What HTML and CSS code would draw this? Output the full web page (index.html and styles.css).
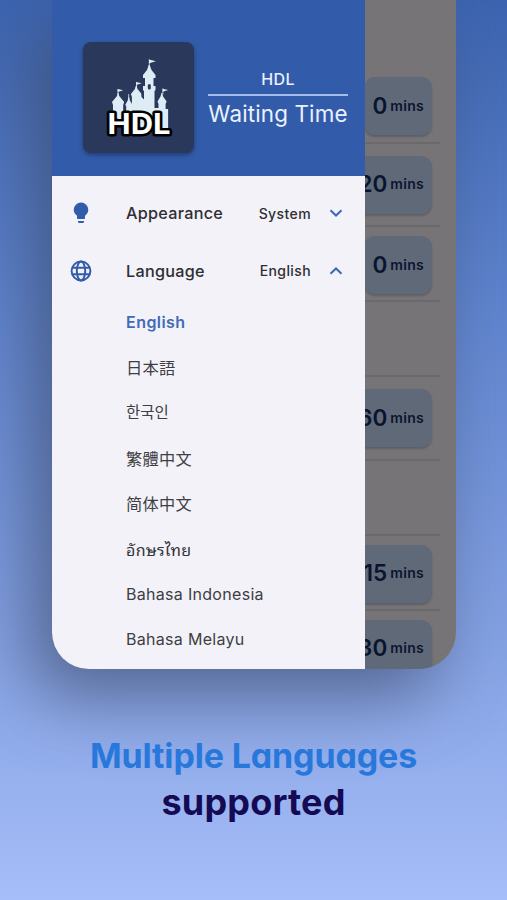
FILE: index.html
```html
<!DOCTYPE html>
<html lang="en">
<head>
<meta charset="utf-8">
<title>HDL Waiting Time</title>
<link rel="stylesheet" href="styles.css">
</head>
<body>
<main class="page">
  <section class="phone">
    <aside class="drawer">
      <header class="header">
        <div class="logo">
          <svg width="111" height="111" viewBox="0 0 111 111">
            <g fill="#deedf5">
              <path d="M30 75V63l-1-3 5-6 .7-3h.8l.7 3 5 6-1 3v7h3v-6l-1-1 2.500-4.500.8-3.500h.6l.8 3.500 2 3.500V55l-1-3 4-5 .8-3h1l.8 3 3.700 4.500.3 3.500 2.500 2.500V49l-1-1v-4h2v-8h-2v-3l4-5 1.700-5h1l1.800 5 4 5v3h-2v8h2v4l-1 1v17h4V62l-1-2.500 3-5 .9-3.500h.8l.9 3.500 3.500 5-1 2.500v5h2.500v23H72z"/>
              <path d="M34.700 47l5.500 1.200-5.500 1.800zM53.200 40l5.500 1.200-5.500 1.800zM66 17.500l7 1.700-4.500 1.300L66 21.500zM79.600 46.800l5.500 1.200-5.500 1.800z"/>
            </g>
            <path stroke="#deedf5" stroke-width=".8" d="M35 47v6M45.700 52v6M53.500 40v6M66.300 17.500v7M79.900 46.500v6"/>
            <rect x="64.800" y="42" width="3" height="5.500" rx="1.500" fill="#2a395b"/>
            <text class="logo-text" x="24.500" y="92" textLength="63" lengthAdjust="spacingAndGlyphs">HDL</text>
          </svg>
        </div>
        <div class="title">
          <div class="title-top">HDL</div>
          <div class="title-main">Waiting Time</div>
        </div>
      </header>
      <div class="menu">
        <div class="row">
          <svg class="icon" viewBox="0 0 24 24"><path fill="currentColor" d="M12 1.500a7.300 7.300 0 0 0-7.300 7.300c0 2.600 1.500 4.600 3.300 5.900V17c0 .6.400 1 1 1h6c.6 0 1-.4 1-1v-2.300c1.800-1.300 3.300-3.300 3.300-5.900A7.300 7.300 0 0 0 12 1.500zM9 20h6v.8c0 .7-.4 1.200-1 1.200h-4c-.6 0-1-.5-1-1.200z"/></svg>
          <span class="label appearance">Appearance</span>
          <span class="value">System</span>
          <svg class="chevron" viewBox="0 0 14 14"><path d="M1.500 4.200 7 9.500l5.500-5.300"/></svg>
        </div>
        <div class="row">
          <svg class="icon" viewBox="0 0 24 24" fill="none" stroke="currentColor" stroke-width="2"><circle cx="12" cy="12" r="9.400"/><ellipse cx="12" cy="12" rx="4.200" ry="9.400"/><path d="M3.200 8.700h17.600M3.200 15.300h17.600"/></svg>
          <span class="label language">Language</span>
          <span class="value">English</span>
          <svg class="chevron" viewBox="0 0 14 14"><path d="M1.500 9.800 7 4.500l5.500 5.300"/></svg>
        </div>
        <ul class="languages">
          <li class="selected">English</li>
          <li class="ja" lang="ja">日本語</li>
          <li class="ko" lang="ko">한국인</li>
          <li class="tc" lang="zh-Hant">繁體中文</li>
          <li class="sc" lang="zh-Hans">简体中文</li>
          <li class="th" lang="th">อักษรไทย</li>
          <li>Bahasa Indonesia</li>
          <li>Bahasa Melayu</li>
        </ul>
      </div>
    </aside>
    <div class="waits">
      <div class="slot first"><div class="card"><b>0</b>mins</div></div>
      <div class="slot tall"><div class="card"><b>20</b>mins</div></div>
      <div class="slot"><div class="card"><b>0</b>mins</div></div>
      <div class="slot"></div>
      <div class="slot tall"><div class="card"><b>60</b>mins</div></div>
      <div class="slot"></div>
      <div class="slot"><div class="card"><b>15</b>mins</div></div>
      <div class="slot last"><div class="card"><b>30</b>mins</div></div>
    </div>
  </section>
  <h1 class="headline"><span class="accent">Multiple Languages</span><span class="dark">supported</span></h1>
</main>
</body>
</html>
```
FILE: styles.css
```css
* { box-sizing: border-box; }
body { margin: 0; font-family: Inter, "Noto Sans", sans-serif; }
.page {
  width: 507px; height: 900px; overflow: hidden;
  background: linear-gradient(180deg, #3c64b0 0%, #5f84ce 34%, #85a2e3 72%, #a6bef9 100%);
}
.phone {
  display: flex; width: 404.5px; height: 669px; margin-left: 51.5px;
  border-radius: 0 0 37px 37px; overflow: hidden; background: #767476;
  box-shadow: -20px 27px 68px rgba(60, 74, 106, .68);
}
.drawer { width: 313px; flex: none; z-index: 1; background: #f3f2f9; }
.header {
  height: 175.5px; padding: 42px 0 0 31.5px; display: flex; gap: 14px;
  background: #325ca9; color: #e9f1ff;
}
.logo {
  width: 111px; height: 111px; flex: none; border-radius: 8px;
  background: #2a395b; box-shadow: 0 2px 4px rgba(20, 35, 80, .55);
}
.logo svg { display: block; }
.logo-text {
  font: 750 28.5px Inter, sans-serif; fill: #fff; stroke: #000;
  stroke-width: 5px; stroke-linejoin: round; paint-order: stroke;
}
.title { width: 140px; padding-top: 26px; text-align: center; white-space: nowrap; }
.title-top {
  height: 28px; padding-top: 1px; border-bottom: 2px solid #a5bce8;
  font-size: 16px; line-height: 20px; font-weight: 500; letter-spacing: .4px;
}
.title-main { font-size: 22.4px; line-height: 34px; letter-spacing: .15px; margin-top: 1px; }
.menu { padding-top: 9px; color: #2e2e33; }
.row { height: 57.5px; padding: 0 21.5px 0 17px; display: flex; align-items: center; }
.icon { width: 24px; height: 24px; margin-right: 33.5px; color: #325caa; }
.label { font-size: 16.2px; font-weight: 500; letter-spacing: .28px; }
.value { margin-left: auto; font-size: 14px; font-weight: 500; letter-spacing: .4px; }
.chevron { width: 14px; height: 14px; margin-left: 18px; fill: none; stroke: #3c68b7; stroke-width: 2; }
.languages { list-style: none; margin: 0; padding: 0 0 0 74.5px; }
.languages li {
  height: 45.4px; line-height: 45.4px; font-size: 16px; letter-spacing: .3px; color: #3e3e43;
}
.languages .selected { color: #406bb7; font-weight: 600; letter-spacing: .45px; }
.languages .ja { font-family: "Noto Sans CJK JP", sans-serif; font-size: 16.3px; letter-spacing: .2px; line-height: 44.5px; }
.languages .ko { font-family: "Noto Sans CJK KR", sans-serif; letter-spacing: 0; font-size: 15.5px; line-height: 42.5px; }
.languages .tc { font-family: "Noto Sans CJK TC", sans-serif; font-size: 16.2px; line-height: 44.5px; }
.languages .sc { font-family: "Noto Sans CJK SC", sans-serif; font-size: 16.2px; line-height: 44.5px; }
.languages .th { font-family: "Noto Sans Thai Looped", "Noto Looped Thai", Loma, Garuda, Waree, "Noto Sans Thai", "Noto Sans", sans-serif; letter-spacing: .3px; line-height: 47px; color: #333338; }
.waits { width: 75.5px; color: #09152f; }
.slot {
  height: 75px; padding: 9px 8px 0 0; display: flex; justify-content: flex-end;
  border-bottom: 2px solid #6b696c;
}
.slot.first { height: 143.5px; padding-top: 77px; }
.slot.tall { height: 83.5px; padding-top: 12px; }
.slot.last { border: 0; }
.card {
  height: 58px; flex: none; padding: 0 8px 2px; display: flex; align-items: center; gap: 3px;
  border-radius: 11px; background: #606977; box-shadow: 0 2px 2px rgba(60, 65, 80, .4);
  font-size: 14px; font-weight: 600; letter-spacing: .3px;
}
.card b { font-size: 22.5px; font-weight: 600; letter-spacing: 0; }
.headline {
  margin: 63px 0 0; display: flex; flex-direction: column; align-items: center;
  font: 650 34px/47px Inter, sans-serif; font-feature-settings: "cv11";
}
.accent { color: #2878dc; letter-spacing: -.15px; }
.dark { color: #150b55; font-size: 36px; letter-spacing: .2px; }
```
